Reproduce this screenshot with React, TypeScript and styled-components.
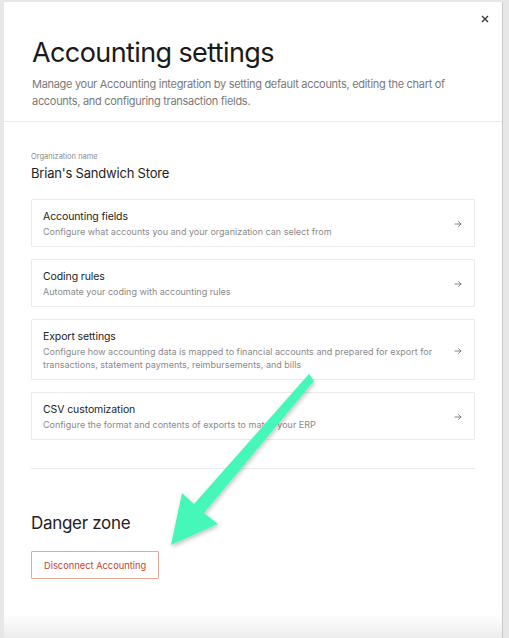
import React from "react";
import styled, { createGlobalStyle } from "styled-components";

const Global = createGlobalStyle`
  html, body { margin: 0; padding: 0; }
  body {
    background: #e7e7e7;
    font-family: Inter, "Noto Sans", "Liberation Sans", sans-serif;
    color: #1c1c1c;
    -webkit-font-smoothing: antialiased;
  }
`;

const Page = styled.div`
  display: flex;
  padding: 2px 0 0 4px;
  height: 636px;
  overflow: hidden;
`;

const Panel = styled.div`
  position: relative;
  width: 498px;
  background: #fff;
  border-right: 1px solid #c9c9c9;
  display: flex;
  flex-direction: column;
  &::after {
    content: "";
    position: absolute;
    left: 0;
    right: 0;
    bottom: 0;
    height: 24px;
    background: linear-gradient(to bottom, rgba(240,240,240,0), #ececec);
  }
`;

const Header = styled.header`
  display: flex;
  flex-direction: column;
  padding: 10px 10px 11px 28px;
  border-bottom: 1px solid #ececec;
`;

const CloseRow = styled.div`
  display: flex;
  justify-content: flex-end;
`;

const CloseButton = styled.button`
  border: none;
  background: none;
  padding: 0;
  width: 14px;
  height: 14px;
  display: flex;
  align-items: center;
  justify-content: center;
  color: #333;
  cursor: pointer;
`;

const Title = styled.h1`
  margin: 10px 0 0;
  font-size: 27px;
  font-weight: 400;
  letter-spacing: -0.6px;
  line-height: 34px;
  color: #1a1a1a;
`;

const Subtitle = styled.p`
  margin: 6px 0 0;
  font-size: 11px;
  line-height: 17px;
  color: #7a7a7a;
  letter-spacing: -0.3px;
  max-width: 440px;
`;

const Body = styled.section`
  display: flex;
  flex-direction: column;
  padding: 30px 27px 0 27px;
`;

const OrgLabel = styled.div`
  font-size: 7.5px;
  color: #8a8a8a;
  line-height: 10px;
`;

const OrgName = styled.div`
  margin-top: 2px;
  font-size: 13px;
  line-height: 18px;
  color: #1e1e1e;
  letter-spacing: -0.2px;
`;

const CardList = styled.div`
  margin-top: 17px;
  display: flex;
  flex-direction: column;
  gap: 12px;
`;

const Card = styled.a`
  display: flex;
  align-items: center;
  gap: 12px;
  padding: 10px 12px 8px 11px;
  border: 1px solid #ebebeb;
  border-radius: 1px;
  text-decoration: none;
  color: inherit;
  cursor: pointer;
`;

const CardText = styled.div`
  flex: 1;
  display: flex;
  flex-direction: column;
  gap: 1px;
`;

const CardTitle = styled.div`
  font-size: 10.5px;
  line-height: 14px;
  color: #222;
  letter-spacing: -0.1px;
`;

const CardDesc = styled.div`
  font-size: 9px;
  line-height: 13px;
  color: #8a8a8a;
`;

const Chevron = styled.span`
  display: flex;
  color: #777;
`;

const Divider = styled.hr`
  margin: 28px 0 0;
  border: none;
  border-top: 1px solid #e9e9e9;
`;

const DangerTitle = styled.h2`
  margin: 43px 0 0;
  font-size: 17px;
  line-height: 22px;
  font-weight: 400;
  letter-spacing: -0.3px;
  color: #222;
`;

const DangerButton = styled.button`
  align-self: flex-start;
  margin-top: 17px;
  height: 28px;
  padding: 0 12px;
  border: 1px solid #eaa899;
  background: #fff;
  color: #c8452b;
  font-family: inherit;
  font-size: 9.3px;
  border-radius: 1px;
  cursor: pointer;
`;

const Annotation = styled.svg`
  position: absolute;
  left: 0;
  top: 0;
  pointer-events: none;
`;

const Arrow = () => (
  <svg width="8" height="8" viewBox="0 0 8 8" fill="none">
    <path d="M1 4h6M4.5 1.5L7 4 4.5 6.5" stroke="currentColor" strokeWidth="0.9" strokeLinecap="round" strokeLinejoin="round" />
  </svg>
);

const cards = [
  { title: "Accounting fields", desc: "Configure what accounts you and your organization can select from" },
  { title: "Coding rules", desc: "Automate your coding with accounting rules" },
  {
    title: "Export settings",
    desc: "Configure how accounting data is mapped to financial accounts and prepared for export for transactions, statement payments, reimbursements, and bills",
  },
  { title: "CSV customization", desc: "Configure the format and contents of exports to match your ERP" },
];

export default function App() {
  return (
    <>
      <Global />
      <Page>
        <Panel>
          <Header>
            <CloseRow>
              <CloseButton aria-label="Close">
                <svg width="8" height="8" viewBox="0 0 8 8">
                  <path d="M1 1l6 6M7 1L1 7" stroke="currentColor" strokeWidth="1.3" />
                </svg>
              </CloseButton>
            </CloseRow>
            <Title>Accounting settings</Title>
            <Subtitle>
              Manage your Accounting integration by setting default accounts, editing the chart of accounts, and
              configuring transaction fields.
            </Subtitle>
          </Header>
          <Body>
            <OrgLabel>Organization name</OrgLabel>
            <OrgName>Brian's Sandwich Store</OrgName>
            <CardList>
              {cards.map((c) => (
                <Card key={c.title}>
                  <CardText>
                    <CardTitle>{c.title}</CardTitle>
                    <CardDesc>{c.desc}</CardDesc>
                  </CardText>
                  <Chevron>
                    <Arrow />
                  </Chevron>
                </Card>
              ))}
            </CardList>
            <Divider />
            <DangerTitle>Danger zone</DangerTitle>
            <DangerButton>Disconnect Accounting</DangerButton>
          </Body>
          <Annotation width="498" height="636" viewBox="4 2 498 636">
            <defs>
              <filter id="sh" x="-20%" y="-20%" width="140%" height="140%">
                <feDropShadow dx="1" dy="2" stdDeviation="2" floodColor="#000" floodOpacity="0.25" />
              </filter>
            </defs>
            <polygon
              filter="url(#sh)"
              fill="#44f7b9"
              points="309,374 314,381 204,513 218,524 171,545 182,493 194,504"
            />
          </Annotation>
        </Panel>
      </Page>
    </>
  );
}
